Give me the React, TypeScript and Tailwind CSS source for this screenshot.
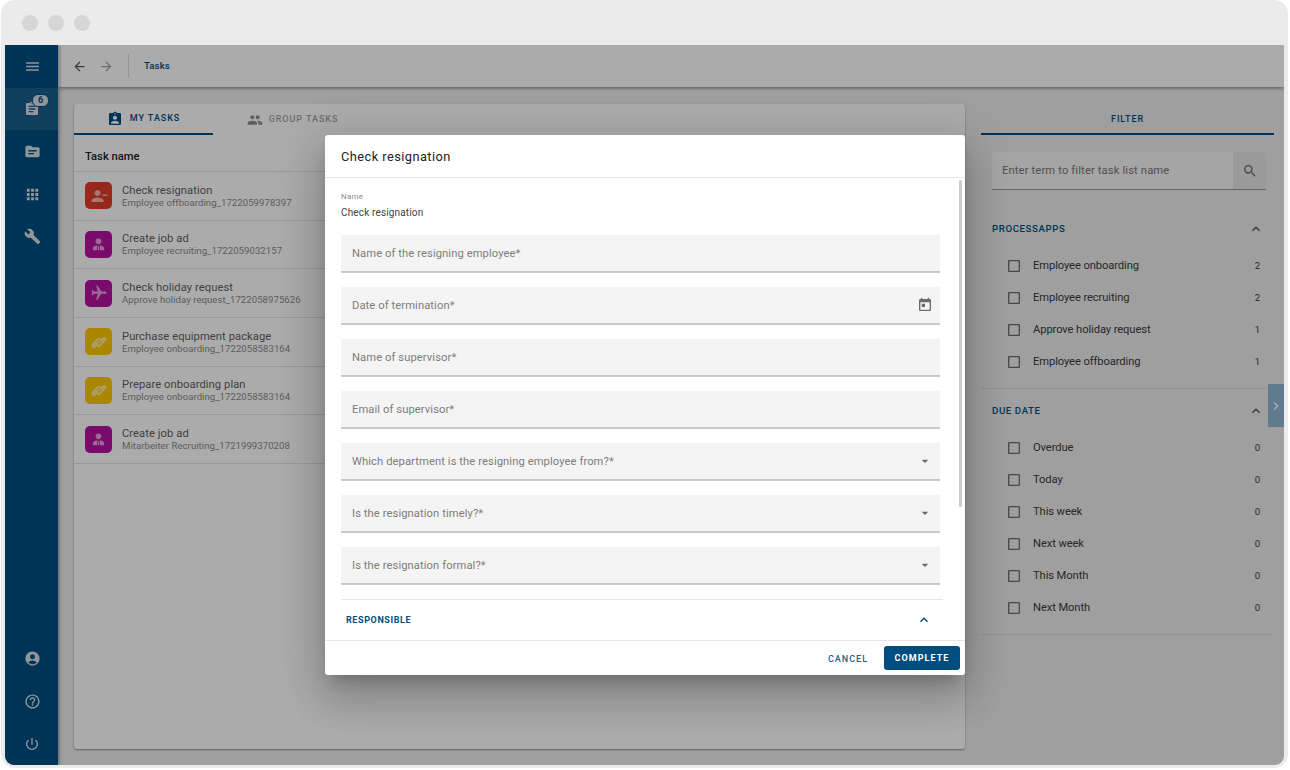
import type { ReactNode } from "react";
import {
  MdMenu,
  MdAssignment,
  MdTopic,
  MdApps,
  MdBuild,
  MdAccountCircle,
  MdHelpOutline,
  MdPowerSettingsNew,
  MdArrowBack,
  MdArrowForward,
  MdAssignmentInd,
  MdPeople,
  MdPersonRemove,
  MdFlight,
  MdToday,
  MdArrowDropDown,
  MdExpandLess,
  MdSearch,
  MdCheckBoxOutlineBlank,
  MdChevronRight,
} from "react-icons/md";

function PersonTie({ size = 17 }: { size?: number }) {
  return (
    <svg width={size} height={size} viewBox="0 0 24 24" fill="currentColor">
      <circle cx="12" cy="7.5" r="4" />
      <path d="M4 20v-2.5c0-2.6 3.6-4 6.2-4.3L9.8 20H4zM20 20v-2.5c0-2.6-3.6-4-6.2-4.3l.4 6.8H20zM11.2 14h1.6l.4 6h-2.4l.4-6z" />
    </svg>
  );
}

function Handshake({ size = 20 }: { size?: number }) {
  return (
    <svg width={size} height={size} viewBox="0 0 24 24" fill="currentColor">
      <path d="M3.5 14.5l6-6.5c1-1 2.5-1.2 3.7-.6l1.3.7 2-1.8c.8-.7 2-.8 2.8-.1l1.2 1c.8.8.8 2 .1 2.8l-6.6 7c-1 1-2.5 1.2-3.7.6l-1.2-.7-2 1.9c-.8.7-2 .8-2.8.1l-1-1c-.8-.8-.7-2 .2-2.4z" />
      <path d="M9 12.5l3-3M11 15l4.5-4.5" stroke="#fdc800" strokeWidth="1.4" fill="none" />
    </svg>
  );
}

const tasks = [
  { title: "Check resignation", sub: "Employee offboarding_1722059978397", color: "bg-[#e03c28]", icon: <MdPersonRemove size={18} /> },
  { title: "Create job ad", sub: "Employee recruiting_1722059032157", color: "bg-[#b40fa0]", icon: <PersonTie /> },
  { title: "Check holiday request", sub: "Approve holiday request_1722058975626", color: "bg-[#b40fa0]", icon: <MdFlight size={18} className="rotate-90" /> },
  { title: "Purchase equipment package", sub: "Employee onboarding_1722058583164", color: "bg-[#fdc800]", icon: <Handshake /> },
  { title: "Prepare onboarding plan", sub: "Employee onboarding_1722058583164", color: "bg-[#fdc800]", icon: <Handshake /> },
  { title: "Create job ad", sub: "Mitarbeiter Recruiting_1721999370208", color: "bg-[#b40fa0]", icon: <PersonTie /> },
];

const processApps = [
  ["Employee onboarding", 2],
  ["Employee recruiting", 2],
  ["Approve holiday request", 1],
  ["Employee offboarding", 1],
] as const;

const dueDates = ["Overdue", "Today", "This week", "Next week", "This Month", "Next Month"];

function NavItem({ children, active }: { children: ReactNode; active?: boolean }) {
  return (
    <div className={`relative flex h-[42.67px] items-center justify-center pl-px text-[#d5dde3] ${active ? "bg-white/10" : ""}`}>
      {children}
    </div>
  );
}

function FilterRow({ label, count }: { label: string; count: number }) {
  return (
    <div className="flex h-8 items-center pl-[25px] pr-[14px] text-[11.2px] tracking-[-0.1px] text-[#3a3a3a]">
      <MdCheckBoxOutlineBlank size={16} className="text-[#6b6b6b]" />
      <span className="ml-[11px] flex-1">{label}</span>
      <span className="text-[9.6px]">{count}</span>
    </div>
  );
}

function Field({ label, right }: { label: string; right?: ReactNode }) {
  return (
    <div className="flex h-[37.6px] w-[599px] items-center justify-between border-b-2 border-[#c9c9c9] bg-[#f4f4f4] pl-[11px] pr-[7px] text-[11.2px] tracking-[0.09px] text-[#7d7d7d]">
      <span className="pt-[4px]">{label}</span>
      {right}
    </div>
  );
}

export default function App() {
  return (
    <div className="h-[770px] w-[1290px] overflow-hidden bg-white font-['Roboto',sans-serif]">
      <div className="ml-[1px] flex h-[768px] w-[1287px] flex-col rounded-[14px] bg-[#ebebeb] px-[4px] pb-[3px]">
        <div className="flex h-[45px] shrink-0 items-center gap-[10px] pl-[17px]">
          <div className="h-4 w-4 rounded-full bg-[#d6d6d6]" />
          <div className="h-4 w-4 rounded-full bg-[#d6d6d6]" />
          <div className="h-4 w-4 rounded-full bg-[#d6d6d6]" />
        </div>

        <div className="relative flex min-h-0 flex-1 overflow-hidden rounded-b-[9px] bg-[#ebebeb]">
          {/* sidebar */}
          <div className="z-20 flex w-[53px] shrink-0 flex-col bg-[#004d7f] shadow-[1px_0_4px_rgba(0,0,0,0.4)]">
            <NavItem><MdMenu size={17} /></NavItem>
            <NavItem active>
              <MdAssignment size={16} />
              <span className="absolute left-[27px] top-[6px] flex h-[13px] w-[17px] items-center justify-center rounded-[6px] border border-[#004d7f] bg-[#d5dde3] text-[9px] font-bold leading-none text-[#004d7f]">
                6
              </span>
            </NavItem>
            <NavItem><MdTopic size={17} /></NavItem>
            <NavItem><MdApps size={17} /></NavItem>
            <NavItem><MdBuild size={17} /></NavItem>
            <div className="flex-1" />
            <NavItem><MdAccountCircle size={17} /></NavItem>
            <NavItem><MdHelpOutline size={17} /></NavItem>
            <NavItem><MdPowerSettingsNew size={16} /></NavItem>
          </div>

          <div className="flex min-w-0 flex-1 flex-col">
            {/* top bar */}
            <div className="z-10 flex h-[42px] shrink-0 items-center bg-[#fcfcfc] pl-[14px] shadow-[0_1px_4px_rgba(0,0,0,0.45)]">
              <MdArrowBack size={15} className="text-[#555]" />
              <MdArrowForward size={15} className="ml-[12px] text-[#a0a0a0]" />
              <div className="ml-[14px] h-[24px] w-px bg-[#dcdcdc]" />
              <span className="ml-[15px] text-[9.6px] font-medium tracking-[0.1px] text-[#004d7f]">Tasks</span>
            </div>

            <div className="flex min-h-0 flex-1 pl-[16px] pr-[11px] pt-[17px]">
              {/* task card */}
              <div className="mb-[16px] flex w-[891px] shrink-0 flex-col overflow-hidden rounded-[3px] bg-[#fcfcfc] shadow-[0_1px_2px_rgba(0,0,0,0.4)]">
                <div className="flex h-[31px] shrink-0 text-[9px] font-medium tracking-[0.95px]">
                  <div className="flex w-[139px] items-center justify-center gap-[7px] border-b-2 border-[#004d7f] pt-[1px] text-[#004d7f]">
                    <MdAssignmentInd size={16} className="-mt-px" />
                    MY TASKS
                  </div>
                  <div className="flex w-[159px] items-center justify-center gap-[6px] pt-[1px] text-[#a3a3a3]">
                    <MdPeople size={16} className="-mt-px text-[#8c8c8c]" />
                    GROUP TASKS
                  </div>
                </div>
                <div className="flex h-[37px] shrink-0 items-center border-b border-[#e0e0e0] pl-[11px] pt-[8px] text-[11.2px] font-medium text-[#222]">
                  Task name
                </div>
                {tasks.map((t, i) => (
                  <div key={i} className="flex h-[48.67px] shrink-0 items-center border-b border-[#e0e0e0] pl-[11px]">
                    <div className={`flex h-[27px] w-[27px] items-center justify-center rounded-[5px] text-white/60 ${t.color}`}>
                      {t.icon}
                    </div>
                    <div className="ml-[10px] flex flex-col pt-[1px]">
                      <span className="text-[11.2px] leading-[12px] tracking-[0.07px] text-[#5f5f5f]">{t.title}</span>
                      <span className="text-[9.6px] leading-[11px] tracking-[0.04px] text-[#8a8a8a]">{t.sub}</span>
                    </div>
                  </div>
                ))}
              </div>

              {/* filter */}
              <div className="ml-[16px] flex w-[293px] shrink-0 flex-col">
                <div className="flex h-[31px] items-center justify-center border-b-2 border-[#004d7f] pt-[2px] text-[9px] font-medium tracking-[0.9px] text-[#004d7f]">
                  FILTER
                </div>
                <div className="mx-[11px] mt-[17px] flex h-[38px] w-[274px] items-stretch border-b border-[#9a9a9a] bg-[#f4f4f4]">
                  <span className="flex flex-1 items-center pl-[10px] pt-[2px] text-[11.2px] tracking-[0.14px] text-[#777]">
                    Enter term to filter task list name
                  </span>
                  <div className="flex w-[33px] items-center justify-center rounded-tr-[3px] bg-[#e4e4e4] text-[#6b6b6b]">
                    <MdSearch size={16} />
                  </div>
                </div>
                <div className="border-b border-[#d8d8d8] pb-[10px]">
                  <div className="mt-[22px] flex h-[34px] items-center justify-between pl-[11px] pr-[10px] text-[9.6px] font-medium tracking-[0.63px] text-[#004d7f]">
                    PROCESSAPPS
                    <MdExpandLess size={16} className="text-[#555]" />
                  </div>
                  <div className="mt-[4px]">
                    {processApps.map(([label, count]) => (
                      <FilterRow key={label} label={label} count={count} />
                    ))}
                  </div>
                </div>
                <div className="border-b border-[#d8d8d8] pb-[10px]">
                  <div className="mt-[5px] flex h-[34px] items-center justify-between pl-[11px] pr-[10px] text-[9.6px] font-medium tracking-[0.63px] text-[#004d7f]">
                    DUE DATE
                    <MdExpandLess size={16} className="text-[#555]" />
                  </div>
                  <div className="mt-[4px]">
                    {dueDates.map((label) => (
                      <FilterRow key={label} label={label} count={0} />
                    ))}
                  </div>
                </div>
              </div>
            </div>
          </div>

          {/* collapse handle */}
          <div className="absolute right-0 top-[339px] z-20 flex h-[43px] w-[16px] items-center justify-center bg-[#90b5d1] text-white">
            <MdChevronRight size={16} />
          </div>

          {/* backdrop */}
          <div className="absolute inset-0 z-30 bg-black/32" />

          {/* dialog */}
          <div className="absolute left-[320px] top-[90px] z-40 flex h-[540px] w-[640px] flex-col rounded-[3px] bg-white shadow-[0_11px_15px_-7px_rgba(0,0,0,0.2),0_24px_38px_3px_rgba(0,0,0,0.14),0_9px_46px_8px_rgba(0,0,0,0.12)]">
            <div className="flex h-[43px] shrink-0 items-center border-b border-[#e6e6e6] pl-[16px] pt-[2px] text-[12.8px] tracking-[0.45px] text-[#222]">
              Check resignation
            </div>
            <div className="relative flex min-h-0 flex-1 flex-col overflow-hidden pl-[16px]">
              <div className="absolute right-[3px] top-[2px] h-[327px] w-[3px] rounded-sm bg-[#cccccc]" />
              <div className="mt-[14px] text-[8px] leading-[10px] tracking-[0.2px] text-[#8a8a8a]">Name</div>
              <div className="mt-[5px] text-[10px] leading-[12px] tracking-[0.15px] text-[#444]">Check resignation</div>
              <div className="mt-[16px] flex flex-col gap-[14.4px]">
                <Field label="Name of the resigning employee*" />
                <Field label="Date of termination*" right={<MdToday size={16} className="text-[#6b6b6b]" />} />
                <Field label="Name of supervisor*" />
                <Field label="Email of supervisor*" />
                <Field label="Which department is the resigning employee from?*" right={<MdArrowDropDown size={16} className="text-[#6b6b6b]" />} />
                <Field label="Is the resignation timely?*" right={<MdArrowDropDown size={16} className="text-[#6b6b6b]" />} />
                <Field label="Is the resignation formal?*" right={<MdArrowDropDown size={16} className="text-[#6b6b6b]" />} />
              </div>
              <div className="mt-[14.5px] flex h-[41px] w-[602px] items-center justify-between border-t border-[#e6e6e6] pl-[5px] pr-[11px] text-[9px] font-bold tracking-[0.6px] text-[#004d7f]">
                <span className="pt-[1px]">RESPONSIBLE</span>
                <MdExpandLess size={16} />
              </div>
            </div>
            <div className="flex h-[35px] shrink-0 items-center justify-end gap-[16px] border-t border-[#e6e6e6] pr-[5px]">
              <span className="pt-[3px] text-[9px] font-medium tracking-[1px] text-[#1d5f8c]">CANCEL</span>
              <button className="h-[24px] w-[76px] rounded-[3px] bg-[#004d7f] pt-[2px] text-[9px] font-bold tracking-[1.05px] text-white">
                COMPLETE
              </button>
            </div>
          </div>
        </div>
      </div>
    </div>
  );
}
